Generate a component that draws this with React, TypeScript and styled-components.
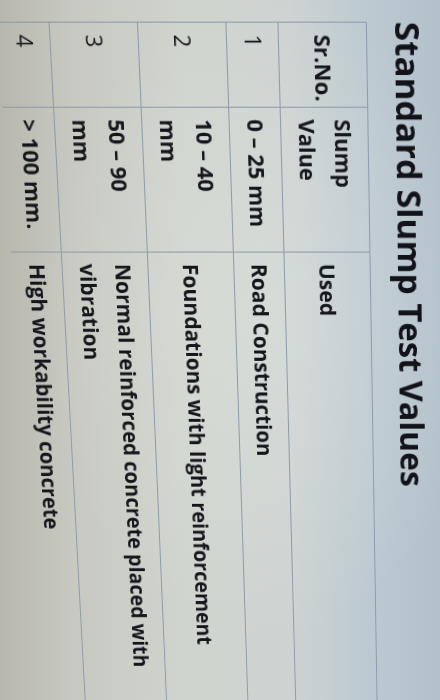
import styled, { createGlobalStyle } from 'styled-components';

const GlobalStyle = createGlobalStyle`
  html, body {
    margin: 0;
    padding: 0;
  }
  body {
    background: #c9ccc6;
    font-family: 'Open Sans', 'Noto Sans', sans-serif;
  }
`;

type Row = { no: string; value: string; used: string };

const rows: Row[] = [
  { no: '1', value: '0 – 25 mm', used: 'Road Construction' },
  { no: '2', value: '10 – 40\nmm', used: 'Foundations with light reinforcement' },
  { no: '3', value: '50 – 90\nmm', used: 'Normal reinforced concrete placed with\nvibration' },
  { no: '4', value: '> 100 mm.', used: 'High workability concrete' },
];

const App = () => {
  return (
    <>
      <GlobalStyle />
      <Screen>
        <Tilt>
          <Sheet>
            <Title>Standard Slump Test Values</Title>
            <Table>
              <colgroup>
                <Col $w={80} />
                <Col $w={140} />
                <Col $w={540} />
              </colgroup>
              <thead>
                <tr>
                  <Cell as='th'>Sr.No.</Cell>
                  <Cell as='th'>{'Slump\nValue'}</Cell>
                  <Cell as='th'>Used</Cell>
                </tr>
              </thead>
              <tbody>
                {rows.map((row) => (
                  <tr key={row.no}>
                    <Cell $light>{row.no}</Cell>
                    <Cell>{row.value}</Cell>
                    <Cell>{row.used}</Cell>
                  </tr>
                ))}
              </tbody>
            </Table>
          </Sheet>
        </Tilt>
      </Screen>
    </>
  );
};
export default App;

const Screen = styled.div`
  position: relative;
  width: 440px;
  height: 700px;
  overflow: hidden;
  background:
    radial-gradient(ellipse at 60% 45%, rgba(235, 238, 232, 0.3), rgba(0, 0, 0, 0) 60%),
    linear-gradient(90deg, #b8b7ad 0%, #c7c9c1 16%, #d0d4ce 42%, #ccd3d1 66%, #bdc9d1 84%, #b3c1cb 100%);
  perspective: 1000px;
  perspective-origin: 500px 350px;
`;

const Tilt = styled.div`
  width: 440px;
  height: 700px;
  transform-origin: 50% 350px;
  transform: rotateX(-7deg);
`;

const Sheet = styled.div`
  box-sizing: border-box;
  width: 800px;
  height: 480px;
  padding: 10px 0 0 32px;
  transform-origin: 0 0;
  transform: translate(440px, 0) rotate(90deg);
  color: #15161c;
`;

const Title = styled.h1`
  margin: 0 0 21px 0;
  font-size: 33px;
  line-height: 37px;
  font-weight: 700;
  white-space: nowrap;
  color: #121318;
`;

const Table = styled.table`
  width: 760px;
  border-collapse: collapse;
  table-layout: fixed;

  tbody tr:last-child td {
    border-bottom: none;
  }
`;

const Col = styled.col<{ $w: number }>`
  width: ${({ $w }) => $w}px;
`;

const Cell = styled.td<{ $light?: boolean }>`
  padding: 7px 11px;
  border: 1px solid #8d9aab;
  font-size: 21px;
  line-height: 35px;
  font-weight: ${({ $light }) => ($light ? 400 : 700)};
  text-align: left;
  vertical-align: middle;
  white-space: pre-line;
`;
